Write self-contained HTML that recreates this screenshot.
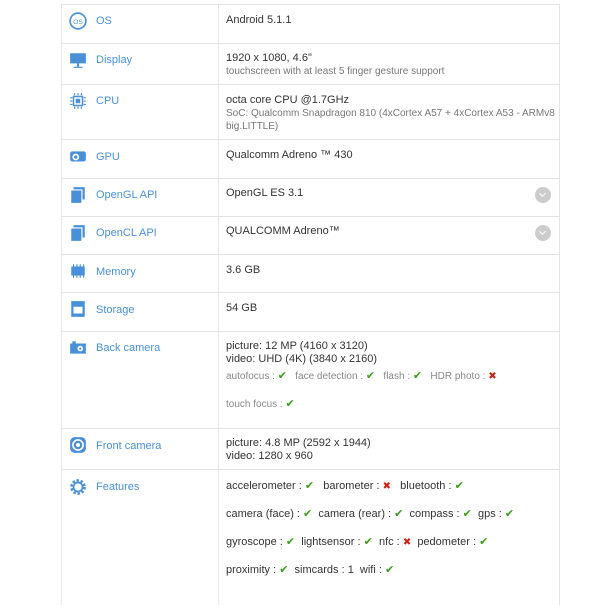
<!DOCTYPE html>
<html><head><style>
body{margin:0;width:610px;height:588px;background:#fff;font-family:"Liberation Sans",sans-serif;overflow:hidden;position:relative}
.t{position:absolute;left:61px;top:4px;width:497px;height:600px;border:1px solid #e3e3e3;border-bottom:none}
.v{position:absolute;left:156px;top:0;width:1px;height:600px;background:#e3e3e3}
.h{position:absolute;left:0;width:497px;height:1px;background:#e3e3e3}
.l{position:absolute;left:34px;font-size:11px;color:#4a90d9}
.ic{position:absolute;left:7px;width:18px;height:18px}
.val{position:absolute;left:164px;font-size:11px;color:#333;line-height:13px}
.s{color:#777;font-size:10px}
.ok{color:#3a9a1a;font-size:11px;font-family:"DejaVu Sans",sans-serif}
.no{color:#c21;font-size:10px;font-weight:bold;font-family:"DejaVu Sans",sans-serif}
.f{position:absolute;left:164px;font-size:11px;color:#333;white-space:nowrap}
.g{position:absolute;left:164px;font-size:10px;color:#888;white-space:nowrap}
.dd{position:absolute;left:473px;width:16px;height:16px;border-radius:50%;background:#ccc}
.dd:after{content:"";position:absolute;left:5px;top:4px;width:4px;height:4px;border-right:1.5px solid #fff;border-bottom:1.5px solid #fff;transform:rotate(45deg)}
</style></head><body>
<div class="t">
<div class="v"></div>
<div class="h" style="top:38px"></div><div class="h" style="top:79px"></div><div class="h" style="top:134px"></div><div class="h" style="top:173px"></div><div class="h" style="top:211px"></div><div class="h" style="top:249px"></div><div class="h" style="top:287px"></div><div class="h" style="top:326px"></div><div class="h" style="top:423px"></div><div class="h" style="top:464px"></div>

<svg class="ic" style="top:7px" viewBox="0 0 16 16"><circle cx="8" cy="8" r="7" fill="none" stroke="#4a90d9" stroke-width="1.5"/><text x="8" y="10.5" font-size="6" text-anchor="middle" fill="#4a90d9" font-family="Liberation Sans">OS</text></svg>
<div class="l" style="top:10px">OS</div>
<div class="val" style="top:9px">Android 5.1.1</div>

<svg class="ic" style="top:46px" viewBox="0 0 16 16"><rect x="1" y="2" width="14" height="9" fill="#4a90d9"/><rect x="7" y="11" width="2" height="3" fill="#4a90d9"/><rect x="4" y="14" width="8" height="1" fill="#4a90d9"/></svg>
<div class="l" style="top:49px">Display</div>
<div class="val" style="top:47px">1920 x 1080, 4.6"<br><span class="s">touchscreen with at least 5 finger gesture support</span></div>

<svg class="ic" style="top:87px" viewBox="0 0 16 16"><rect x="4" y="4" width="8" height="8" fill="none" stroke="#4a90d9" stroke-width="1.3"/><rect x="6" y="6" width="4" height="4" fill="#4a90d9"/><path d="M5 1v2M8 1v2M11 1v2M5 13v2M8 13v2M11 13v2M1 5h2M1 8h2M1 11h2M13 5h2M13 8h2M13 11h2" stroke="#4a90d9"/></svg>
<div class="l" style="top:90px">CPU</div>
<div class="val" style="top:89px">octa core CPU @1.7GHz<br><span class="s">SoC: Qualcomm Snapdragon 810 (4xCortex A57 + 4xCortex A53 - ARMv8<br>big.LITTLE)</span></div>

<svg class="ic" style="top:143px" viewBox="0 0 16 16"><rect x="1" y="3" width="14" height="9" rx="2" fill="#4a90d9"/><circle cx="6" cy="8" r="3" fill="#fff"/><circle cx="6" cy="8" r="1.5" fill="#4a90d9"/></svg>
<div class="l" style="top:146px">GPU</div>
<div class="val" style="top:144px">Qualcomm Adreno ™ 430</div>

<svg class="ic" style="top:181px" viewBox="0 0 16 16"><path d="M2 4h9v11H2z" fill="#4a90d9"/><path d="M4 1h10v11h-2V3H4z" fill="#4a90d9"/></svg>
<div class="l" style="top:184px">OpenGL API</div>
<div class="val" style="top:182px">OpenGL ES 3.1</div>
<div class="dd" style="top:182px"></div>

<svg class="ic" style="top:219px" viewBox="0 0 16 16"><path d="M2 4h9v11H2z" fill="#4a90d9"/><path d="M4 1h10v11h-2V3H4z" fill="#4a90d9"/></svg>
<div class="l" style="top:222px">OpenCL API</div>
<div class="val" style="top:220px">QUALCOMM Adreno™</div>
<div class="dd" style="top:220px"></div>

<svg class="ic" style="top:257px" viewBox="0 0 16 16"><rect x="2" y="4" width="12" height="8" fill="#4a90d9"/><path d="M4 2v2M7 2v2M10 2v2M13 2v2M4 12v2M7 12v2M10 12v2M13 12v2" stroke="#4a90d9"/></svg>
<div class="l" style="top:261px">Memory</div>
<div class="val" style="top:259px">3.6 GB</div>

<svg class="ic" style="top:295px" viewBox="0 0 16 16"><rect x="2" y="1" width="12" height="14" fill="#4a90d9"/><rect x="4" y="6" width="8" height="6" fill="#fff"/></svg>
<div class="l" style="top:299px">Storage</div>
<div class="val" style="top:297px">54 GB</div>

<svg class="ic" style="top:334px" viewBox="0 0 16 16"><rect x="1" y="4" width="14" height="9" fill="#4a90d9"/><rect x="3" y="2" width="3" height="2" fill="#4a90d9"/><circle cx="10" cy="8.5" r="2.5" fill="#fff"/><circle cx="10" cy="8.5" r="1" fill="#4a90d9"/></svg>
<div class="l" style="top:337px">Back camera</div>
<div class="val" style="top:335px">picture: 12 MP (4160 x 3120)<br>video: UHD (4K) (3840 x 2160)</div>
<div class="g" style="top:364px">autofocus : <span class="ok">✔</span> &nbsp; face detection : <span class="ok">✔</span> &nbsp; flash : <span class="ok">✔</span> &nbsp; HDR photo : <span class="no">✖</span></div>
<div class="g" style="top:392px">touch focus : <span class="ok">✔</span></div>

<svg class="ic" style="top:431px" viewBox="0 0 16 16"><rect x="1" y="1" width="14" height="14" rx="4" fill="#4a90d9"/><circle cx="8" cy="8" r="4.5" fill="none" stroke="#fff" stroke-width="1.5"/><circle cx="8" cy="8" r="1.8" fill="#fff"/></svg>
<div class="l" style="top:435px">Front camera</div>
<div class="val" style="top:432px">picture: 4.8 MP (2592 x 1944)<br>video: 1280 x 960</div>

<svg class="ic" style="top:473px" viewBox="0 0 16 16"><circle cx="8" cy="8" r="5.5" fill="none" stroke="#4a90d9" stroke-width="3" stroke-dasharray="2 1.5"/><circle cx="8" cy="8" r="4" fill="none" stroke="#4a90d9" stroke-width="1.5"/></svg>
<div class="l" style="top:476px">Features</div>
<div class="f" style="top:474px">accelerometer : <span class="ok">✔</span> &nbsp; barometer : <span class="no">✖</span> &nbsp; bluetooth : <span class="ok">✔</span></div>
<div class="f" style="top:502px">camera (face) : <span class="ok">✔</span> &nbsp;camera (rear) : <span class="ok">✔</span> &nbsp;compass : <span class="ok">✔</span> &nbsp;gps : <span class="ok">✔</span></div>
<div class="f" style="top:530px">gyroscope : <span class="ok">✔</span> &nbsp;lightsensor : <span class="ok">✔</span> &nbsp;nfc : <span class="no">✖</span> &nbsp;pedometer : <span class="ok">✔</span></div>
<div class="f" style="top:558px">proximity : <span class="ok">✔</span> &nbsp;simcards : 1 &nbsp;wifi : <span class="ok">✔</span></div>
</div>
</body></html>
